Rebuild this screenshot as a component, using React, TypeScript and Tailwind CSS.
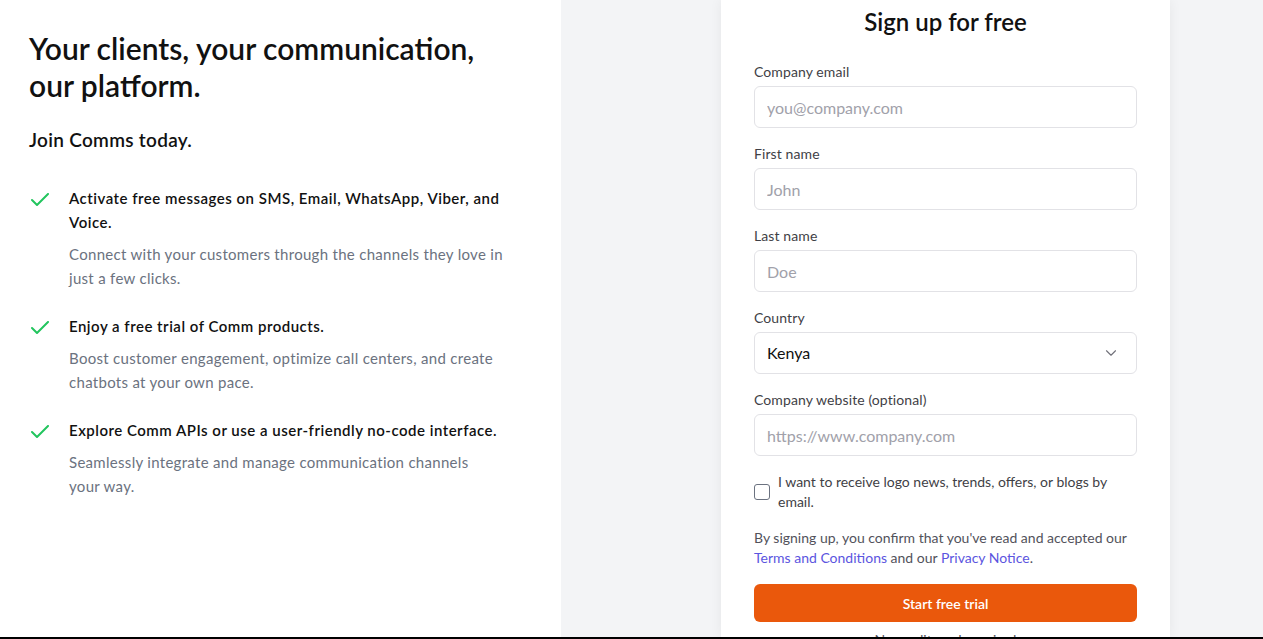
import { ChevronDown } from "lucide-react";

type Perk = {
  title: string;
  body: string;
  narrow?: boolean;
};

const perks: Perk[] = [
  {
    title: "Activate free messages on SMS, Email, WhatsApp, Viber, and Voice.",
    body: "Connect with your customers through the channels they love in just a few clicks.",
  },
  {
    title: "Enjoy a free trial of Comm products.",
    body: "Boost customer engagement, optimize call centers, and create chatbots at your own pace.",
  },
  {
    title: "Explore Comm APIs or use a user-friendly no-code interface.",
    body: "Seamlessly integrate and manage communication channels your way.",
    narrow: true,
  },
];

const CheckMark = () => (
  <svg width="20" height="14" viewBox="0 0 20 14" fill="none" className="mt-[7px]">
    <polyline
      points="2,7 7,12 18,1"
      stroke="#22c55e"
      strokeWidth="2"
      strokeLinecap="round"
      strokeLinejoin="round"
    />
  </svg>
);

const Field = ({ label, placeholder }: { label: string; placeholder: string }) => (
  <div className="mb-4">
    <label className="block text-[14px] leading-5 text-[#3f3f46] mb-1 tracking-[0.1px]">{label}</label>
    <input
      placeholder={placeholder}
      className="w-full h-[42px] rounded-md border border-[#e2e2e6] px-3 text-[16px] text-[#111] placeholder:text-[#a1a1aa] outline-none"
    />
  </div>
);

const App = () => {
  return (
    <div
      className="h-[639px] flex flex-col overflow-hidden"
      style={{ fontFamily: "Lato, 'Open Sans', sans-serif" }}
    >
      <div className="flex flex-1 min-h-0">
        <section className="w-[561px] bg-white pl-[29px] pt-[30px]">
          <h1 className="text-[30px] leading-[37px] font-semibold text-[#111]">
            Your clients, your communication,
            <br />
            our platform.
          </h1>
          <p className="mt-[22px] text-[19px] leading-7 font-semibold text-[#111] tracking-[0.3px]">Join Comms today.</p>
          <ul className="mt-8">
            {perks.map((perk) => (
              <li key={perk.title} className="flex mb-6">
                <span className="w-10 shrink-0 pl-[1px]">
                  <CheckMark />
                </span>
                <div className="w-[445px]">
                  <p className="text-[15px] leading-6 font-semibold text-[#111] tracking-[0.5px]">{perk.title}</p>
                  <p
                    className={
                      perk.narrow
                        ? "mt-2 max-w-[425px] text-[15px] leading-6 text-[#6b7280] tracking-[0.3px]"
                        : "mt-2 text-[15px] leading-6 text-[#6b7280] tracking-[0.3px]"
                    }
                  >
                    {perk.body}
                  </p>
                </div>
              </li>
            ))}
          </ul>
        </section>

        <section className="flex-1 bg-[#f3f4f6] pl-[160px]">
          <div className="w-[449px] h-full bg-white shadow-[0_0_12px_rgba(0,0,0,0.06)] px-[33px] pt-[6px]">
            <h2 className="text-center text-[24px] leading-8 font-semibold text-[#111] mb-6">Sign up for free</h2>
            <Field label="Company email" placeholder="you@company.com" />
            <Field label="First name" placeholder="John" />
            <Field label="Last name" placeholder="Doe" />
            <div className="mb-4">
              <label className="block text-[14px] leading-5 text-[#3f3f46] mb-1 tracking-[0.1px]">Country</label>
              <div className="w-full h-[42px] rounded-md border border-[#e2e2e6] px-3 flex items-center justify-between">
                <span className="text-[16px] text-[#111]">Kenya</span>
                <ChevronDown size={18} strokeWidth={1.5} className="text-[#71717a] mr-1" />
              </div>
            </div>
            <Field label="Company website (optional)" placeholder="https://www.company.com" />

            <div className="flex items-center gap-2 mt-[1px]">
              <span className="w-4 h-4 shrink-0 rounded-[3px] border border-[#6b7280]" />
              <p className="text-[14px] leading-5 text-[#3f3f46]">
                I want to receive logo news, trends, offers, or blogs by email.
              </p>
            </div>

            <p className="mt-4 text-[14px] leading-5 text-[#52525b]">
              By signing up, you confirm that you've read and accepted our{" "}
              <a className="text-[#5b55e0]">Terms and Conditions</a> and our{" "}
              <a className="text-[#5b55e0]">Privacy Notice</a>.
            </p>

            <button className="mt-4 w-full h-[38px] rounded-md bg-[#ea580c] text-white text-[14px] font-semibold">
              Start free trial
            </button>
            <p className="mt-[8px] text-center text-[14px] leading-5 text-[#52525b]">No credit card required</p>
          </div>
        </section>
      </div>
      <div className="h-[2px] bg-black shrink-0" />
    </div>
  );
};

export default App;
